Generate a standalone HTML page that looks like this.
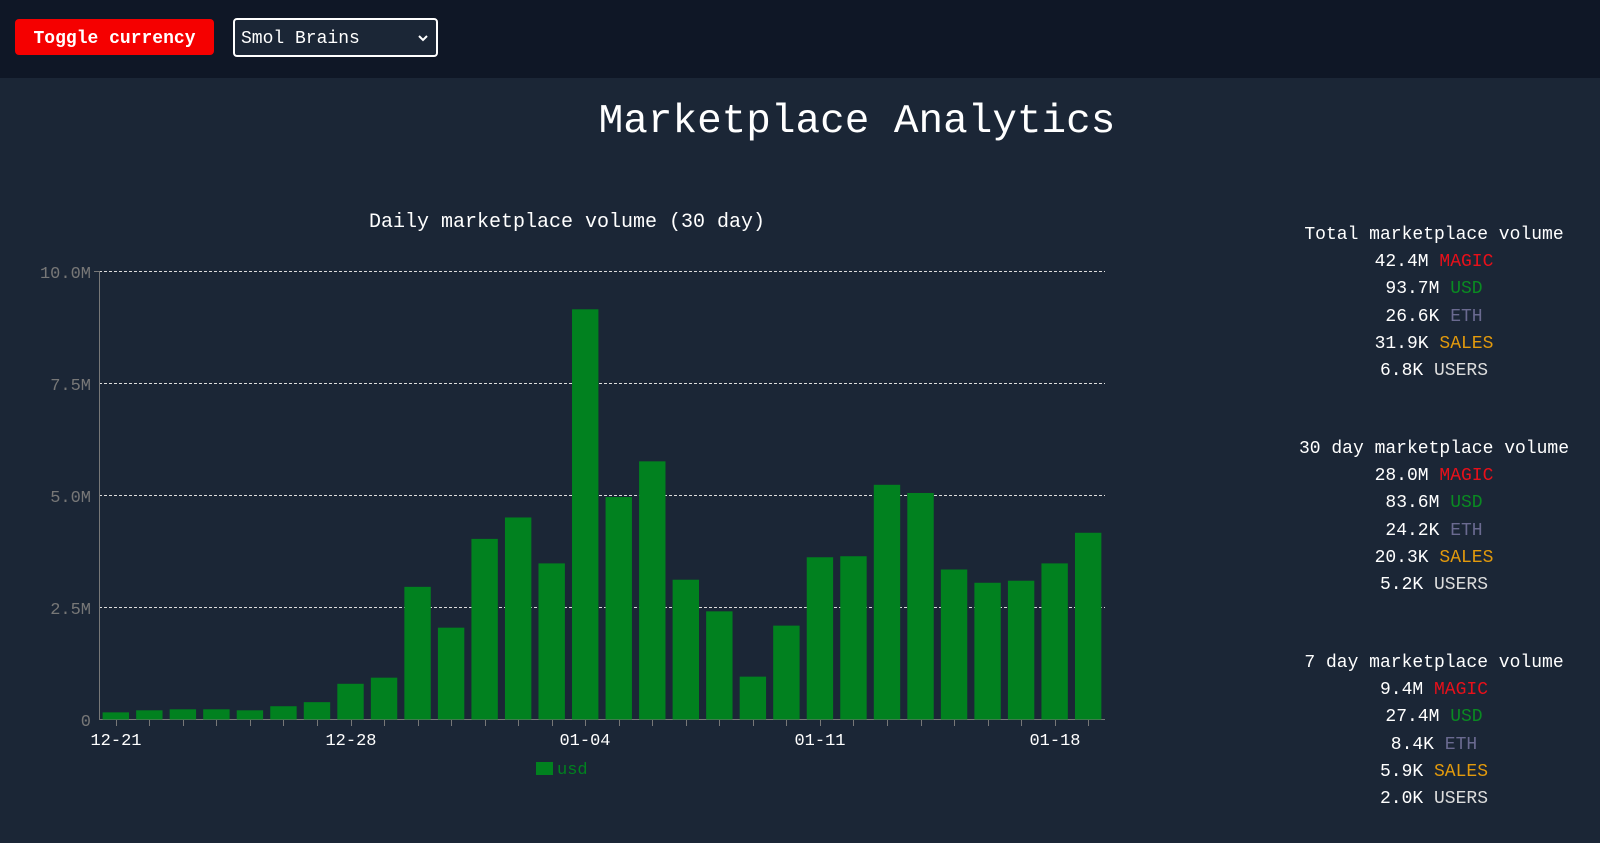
<!DOCTYPE html>
<html><head><meta charset="utf-8"><style>
html,body{margin:0;padding:0;width:1600px;height:843px;overflow:hidden;background:#1b2636;font-family:"Liberation Mono",monospace;color:#fff}
.hdr{position:absolute;left:0;top:0;width:1600px;height:78px;background:#0f1726}
.btn{position:absolute;left:15px;top:19px;width:199px;height:36px;background:#f50000;border-radius:4px;color:#fff;font-weight:bold;font-size:18px;line-height:40px;text-align:center}
.sel{position:absolute;left:233px;top:18px;height:35px;border:2px solid #fff;border-radius:4px;background:#1b2636;font-size:18px;line-height:38px;padding-left:6px;box-sizing:content-box;width:195px}
.title{position:absolute;left:0;width:1714px;top:97px;text-align:center;font-size:41px;line-height:50px}
.ct{position:absolute;left:0;width:1134px;top:210px;text-align:center;font-size:20px;line-height:26px}
.stats{position:absolute;left:1234px;width:400px;text-align:center;font-size:18px;line-height:27.2px}
.m{color:#e8101a}.u{color:#0a8a22}.e{color:#6a6a90}.s{color:#e39a0c}.w{color:#ddd}
</style></head><body>
<div class="hdr">
<div class="btn">Toggle currency</div>
<div class="sel">Smol Brains<svg style="position:absolute;right:8px;top:14px" width="10" height="8" viewBox="0 0 10 8"><path d="M1 2 L5 6 L9 2" stroke="#fff" stroke-width="2" fill="none"/></svg></div>
</div>
<div class="title">Marketplace Analytics</div>
<div class="ct">Daily marketplace volume (30 day)</div>
<svg style="position:absolute;left:0;top:0" width="1200" height="843" id="c">
<g stroke="#ddd" stroke-dasharray="3,2" stroke-width="1">
<line x1="99" y1="271.5" x2="1105" y2="271.5"/>
<line x1="99" y1="383.5" x2="1105" y2="383.5"/>
<line x1="99" y1="495.5" x2="1105" y2="495.5"/>
<line x1="99" y1="607.5" x2="1105" y2="607.5"/>
</g>
<g fill="#777" font-family="Liberation Mono,monospace" font-size="17" text-anchor="end">
<text x="91" y="278">10.0M</text><text x="91" y="390">7.5M</text><text x="91" y="502">5.0M</text><text x="91" y="614">2.5M</text><text x="91" y="726">0</text>
</g>
<line x1="99.5" y1="271" x2="99.5" y2="720" stroke="#777"/>
<line x1="94" y1="271.5" x2="99" y2="271.5" stroke="#777"/>
<line x1="99" y1="719.5" x2="1105" y2="719.5" stroke="#777"/>
<g id="bars" fill="#01811f"></g>
<g id="ticks" stroke="#777"></g>
<g fill="#fff" font-family="Liberation Mono,monospace" font-size="17" text-anchor="middle">
<text x="116" y="745">12-21</text><text x="351" y="745">12-28</text><text x="585" y="745">01-04</text><text x="820" y="745">01-11</text><text x="1055" y="745">01-18</text>
</g>
<rect x="536" y="762" width="17" height="13" fill="#01811f"/>
<text x="557" y="774" fill="#01811f" font-family="Liberation Mono,monospace" font-size="17">usd</text>
</svg>
<script>
var tops=[698,696,695,695,696,692,688,670,664,575,615,528,507,552,303,487,452,568,599,663,613,546,545,475,483,558,571,569,552,522];
var g=document.getElementById('bars'),t=document.getElementById('ticks'),s='',u='';
for(var i=0;i<30;i++){var cx=115.8+i*33.53,h=(705-tops[i])*1.0204;s+='<rect x="'+(cx-13.2)+'" y="'+(719.5-h)+'" width="26.4" height="'+h+'"/>';
var tx=Math.round(cx)+0.5;u+='<line x1="'+tx+'" y1="720" x2="'+tx+'" y2="726"/>';}
g.innerHTML=s;t.innerHTML=u;
</script>
<div class="stats" style="top:222px">Total marketplace volume<br>42.4M <span class="m">MAGIC</span><br>93.7M <span class="u">USD</span><br>26.6K <span class="e">ETH</span><br>31.9K <span class="s">SALES</span><br>6.8K <span class="w">USERS</span></div>
<div class="stats" style="top:436px">30 day marketplace volume<br>28.0M <span class="m">MAGIC</span><br>83.6M <span class="u">USD</span><br>24.2K <span class="e">ETH</span><br>20.3K <span class="s">SALES</span><br>5.2K <span class="w">USERS</span></div>
<div class="stats" style="top:650px">7 day marketplace volume<br>9.4M <span class="m">MAGIC</span><br>27.4M <span class="u">USD</span><br>8.4K <span class="e">ETH</span><br>5.9K <span class="s">SALES</span><br>2.0K <span class="w">USERS</span></div>
</body></html>
